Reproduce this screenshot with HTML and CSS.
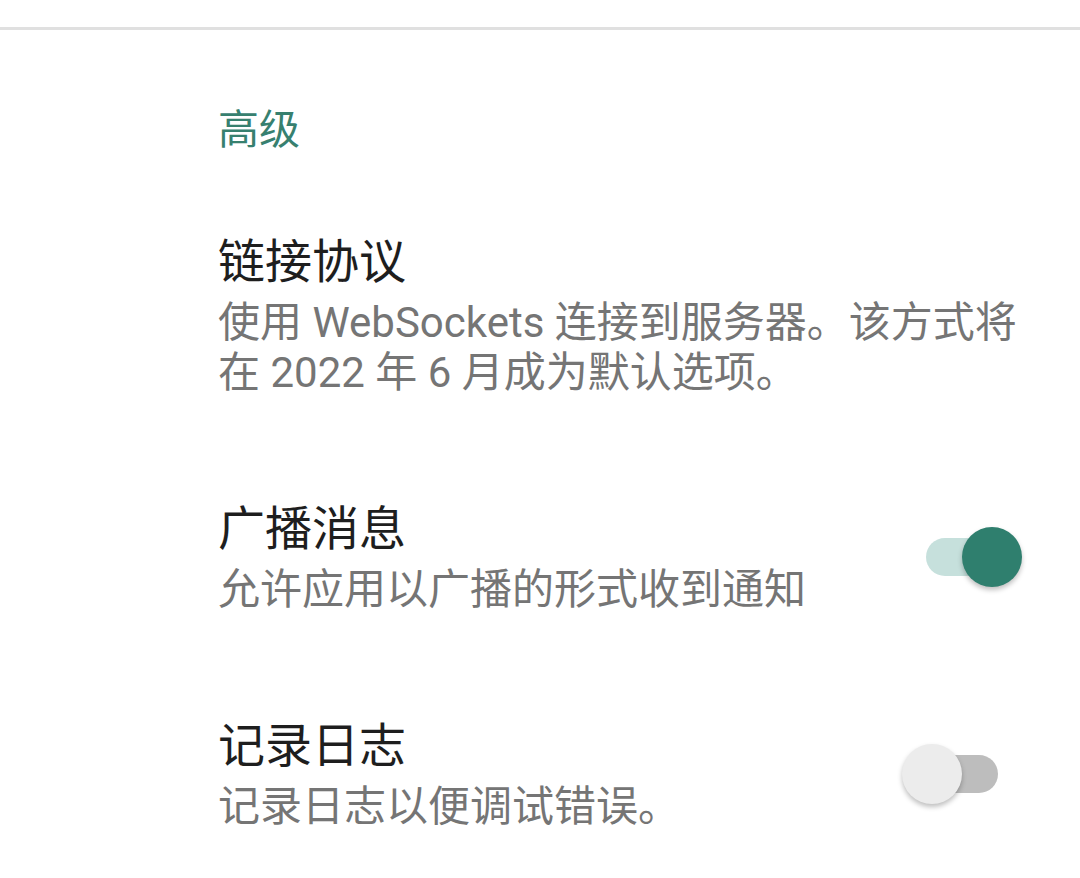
FILE: index.html
```html
<!DOCTYPE html>
<html lang="zh-CN">
<head>
<meta charset="utf-8">
<link rel="stylesheet" href="styles.css">
</head>
<body>
<div class="divider"></div>
<main class="settings">
  <h2 class="section-title">高级</h2>
  <div class="row">
    <div class="text">
      <div class="title">链接协议</div>
      <div class="summary">使用 WebSockets 连接到服务器。该方式将在 2022 年 6 月成为默认选项。</div>
    </div>
  </div>
  <div class="row">
    <div class="text">
      <div class="title">广播消息</div>
      <div class="summary">允许应用以广播的形式收到通知</div>
    </div>
    <div class="switch on"><span class="track"></span><span class="thumb"></span></div>
  </div>
  <div class="row">
    <div class="text">
      <div class="title">记录日志</div>
      <div class="summary">记录日志以便调试错误。</div>
    </div>
    <div class="switch off"><span class="track"></span><span class="thumb"></span></div>
  </div>
</main>
</body>
</html>
```
FILE: styles.css
```css
html, body {
  margin: 0;
  padding: 0;
  background: #ffffff;
}
body {
  font-family: Roboto, "Noto Sans CJK SC", sans-serif;
  width: 1080px;
  height: 878px;
  overflow: hidden;
}
.divider {
  margin-top: 27px;
  height: 3px;
  background: #e0e0e0;
}
.settings {
  padding: 0 58px 0 218px;
}
.section-title {
  margin: 75px 0 0 0;
  font-weight: 400;
  font-size: 41px;
  line-height: 50px;
  color: #37806f;
}
.row {
  display: flex;
  align-items: center;
  gap: 20px;
  margin-top: 77px;
}
.row + .row {
  margin-top: 101px;
}
.text {
  flex: 1;
  min-width: 0;
}
.title {
  font-size: 47px;
  line-height: 60px;
  color: #1e1e1e;
}
.summary {
  margin-top: 6px;
  font-size: 42px;
  line-height: 50px;
  color: #757575;
}
.switch {
  position: relative;
  flex: none;
  width: 120px;
  height: 60px;
}
.track {
  position: absolute;
  left: 24px;
  right: 24px;
  top: 11px;
  height: 38px;
  border-radius: 19px;
}
.thumb {
  position: absolute;
  top: 0;
  width: 60px;
  height: 60px;
  border-radius: 50%;
  box-shadow: 0 3px 5px rgba(0, 0, 0, 0.25);
}
.switch.on .track { background: #c6e0dc; }
.switch.on .thumb { right: 0; background: #2f7f6e; }
.switch.off .track { background: #bdbdbd; }
.switch.off .thumb { left: 0; background: #ececec; }
```
